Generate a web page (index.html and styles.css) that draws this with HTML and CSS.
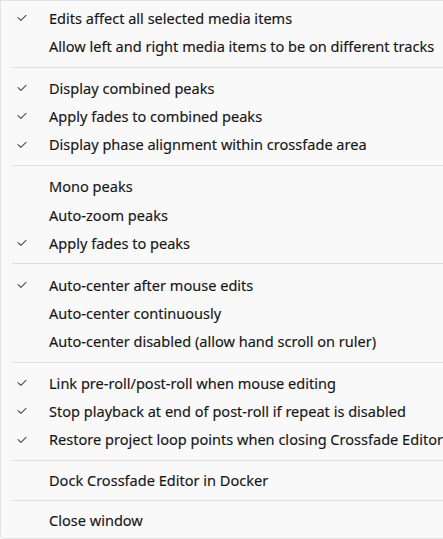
FILE: index.html
```html
<!DOCTYPE html>
<html lang="en">
<head>
<meta charset="utf-8">
<title>Crossfade Editor menu</title>
<link rel="stylesheet" href="styles.css">
</head>
<body>
<div class="menu">
  <div class="item checked"><span class="check"><svg viewBox="0 0 10 8" width="10" height="8"><path d="M1 3.6 L3.9 6.4 L9 1.4" /></svg></span><span class="label">Edits affect all selected media items</span></div>
  <div class="item"><span class="check"></span><span class="label">Allow left and right media items to be on different tracks</span></div>
  <div class="sep"></div>
  <div class="item checked"><span class="check"><svg viewBox="0 0 10 8" width="10" height="8"><path d="M1 3.6 L3.9 6.4 L9 1.4" /></svg></span><span class="label">Display combined peaks</span></div>
  <div class="item checked"><span class="check"><svg viewBox="0 0 10 8" width="10" height="8"><path d="M1 3.6 L3.9 6.4 L9 1.4" /></svg></span><span class="label">Apply fades to combined peaks</span></div>
  <div class="item checked"><span class="check"><svg viewBox="0 0 10 8" width="10" height="8"><path d="M1 3.6 L3.9 6.4 L9 1.4" /></svg></span><span class="label">Display phase alignment within crossfade area</span></div>
  <div class="sep"></div>
  <div class="item"><span class="check"></span><span class="label">Mono peaks</span></div>
  <div class="item"><span class="check"></span><span class="label">Auto-zoom peaks</span></div>
  <div class="item checked"><span class="check"><svg viewBox="0 0 10 8" width="10" height="8"><path d="M1 3.6 L3.9 6.4 L9 1.4" /></svg></span><span class="label">Apply fades to peaks</span></div>
  <div class="sep"></div>
  <div class="item checked"><span class="check"><svg viewBox="0 0 10 8" width="10" height="8"><path d="M1 3.6 L3.9 6.4 L9 1.4" /></svg></span><span class="label">Auto-center after mouse edits</span></div>
  <div class="item"><span class="check"></span><span class="label">Auto-center continuously</span></div>
  <div class="item"><span class="check"></span><span class="label">Auto-center disabled (allow hand scroll on ruler)</span></div>
  <div class="sep"></div>
  <div class="item checked"><span class="check"><svg viewBox="0 0 10 8" width="10" height="8"><path d="M1 3.6 L3.9 6.4 L9 1.4" /></svg></span><span class="label">Link pre-roll/post-roll when mouse editing</span></div>
  <div class="item checked"><span class="check"><svg viewBox="0 0 10 8" width="10" height="8"><path d="M1 3.6 L3.9 6.4 L9 1.4" /></svg></span><span class="label">Stop playback at end of post-roll if repeat is disabled</span></div>
  <div class="item checked"><span class="check"><svg viewBox="0 0 10 8" width="10" height="8"><path d="M1 3.6 L3.9 6.4 L9 1.4" /></svg></span><span class="label">Restore project loop points when closing Crossfade Editor</span></div>
  <div class="sep sep-tight"></div>
  <div class="item"><span class="check"></span><span class="label">Dock Crossfade Editor in Docker</span></div>
  <div class="sep sep-tighter"></div>
  <div class="item"><span class="check"></span><span class="label">Close window</span></div>
</div>
</body>
</html>
```

FILE: styles.css
```css
html, body {
  margin: 0;
  padding: 0;
  background: #f9f9f9;
}

.menu {
  box-sizing: border-box;
  width: 443px;
  height: 539px;
  background: #f9f9f9;
  border-top: 1px solid #e3e3e3;
  border-left: 1px solid #e3e3e3;
  border-bottom: 1px solid #e3e3e3;
  border-bottom-left-radius: 5px;
  padding-top: 3px;
  font-family: "Noto Sans", "Open Sans", sans-serif;
  font-size: 14.55px;
  color: #161616;
  display: flex;
  flex-direction: column;
}

.item {
  height: 28.2px;
  display: flex;
  align-items: center;
  white-space: nowrap;
}

.check {
  width: 48px;
  flex: 0 0 48px;
  display: flex;
  align-items: center;
  padding-left: 16px;
  box-sizing: border-box;
}

.check svg {
  display: block;
  fill: none;
  stroke: #555;
  stroke-width: 1.2;
  stroke-linecap: round;
  stroke-linejoin: round;
}

.label {
  line-height: 1;
  -webkit-text-stroke: 0.15px #161616;
}

.sep {
  height: 1px;
  background: #e0e0e0;
  margin: 6.4px 0 6.4px 11px;
  flex: 0 0 1px;
}

.sep-tight {
  margin: 6px 0 5.8px 11px;
}

.sep-tighter {
  margin: 5.6px 0 5.2px 11px;
}
```
